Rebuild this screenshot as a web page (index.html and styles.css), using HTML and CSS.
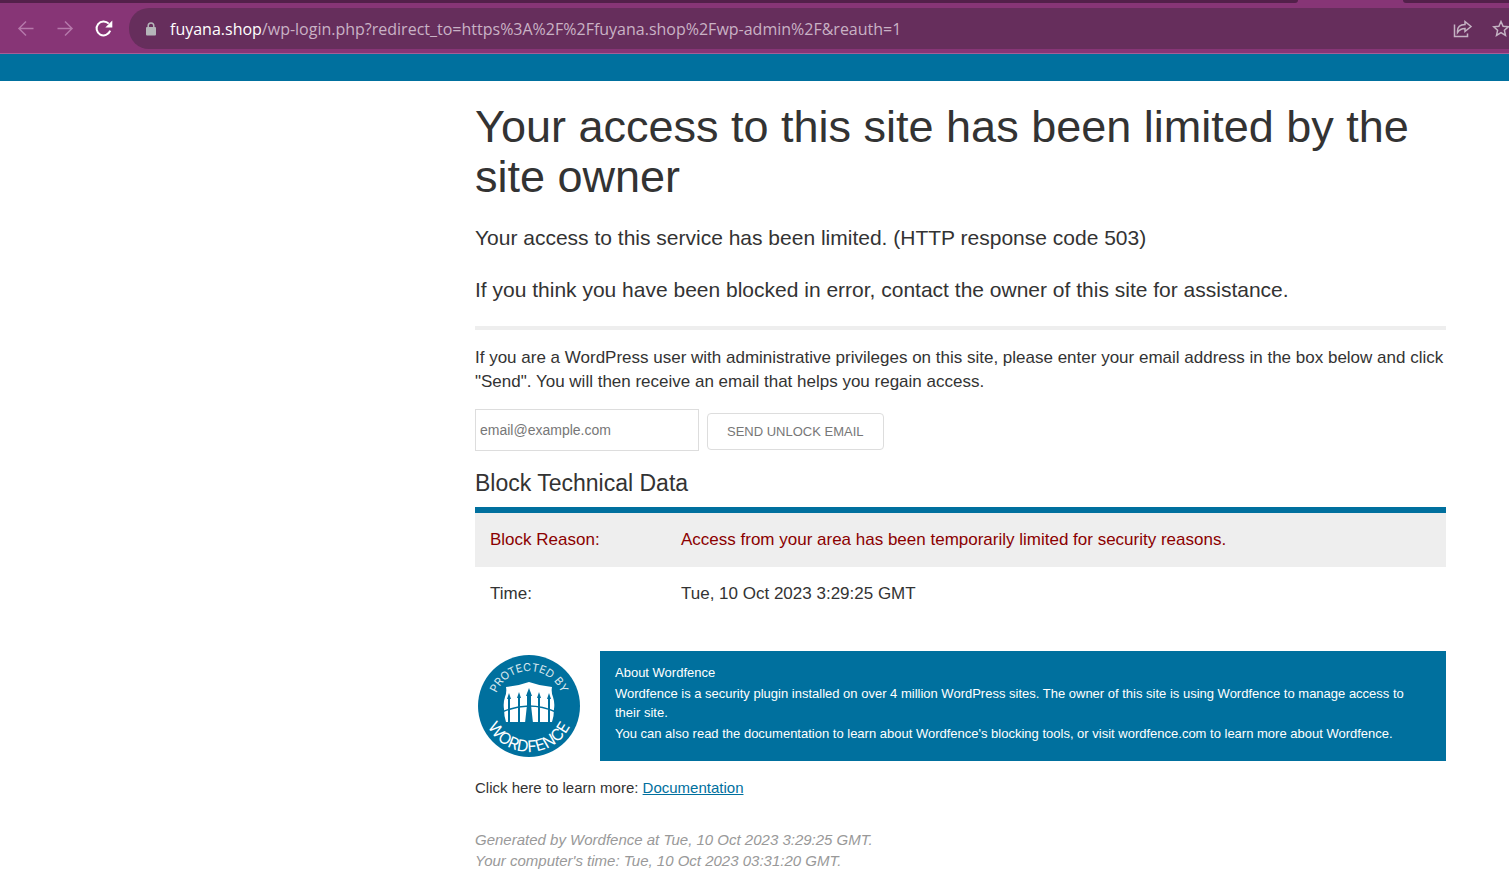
FILE: index.html
```
<!DOCTYPE html>
<html lang="en">
<head>
    <meta charset="UTF-8">
    <meta name="viewport" content="width=device-width, initial-scale=1.0">
    <title>Your access to this site has been limited</title>
    <link rel="stylesheet" href="styles.css">
</head>
<body>
    <header class="browser">
        <div class="tab-strip">
            <span class="tab tab-left"></span>
            <span class="tab tab-right"></span>
        </div>
        <div class="toolbar">
            <nav class="nav-buttons">
                <button type="button" class="icon-button dim" aria-label="Back">
                    <svg width="18" height="18" viewBox="0 0 18 18"><path d="M16.500 8.500H2M9 1.500l-7 7 7 7"/></svg>
                </button>
                <button type="button" class="icon-button dim" aria-label="Forward">
                    <svg width="18" height="18" viewBox="0 0 18 18"><path d="M1.500 8.500H16M9 1.500l7 7-7 7"/></svg>
                </button>
                <button type="button" class="icon-button reload" aria-label="Reload">
                    <svg width="18" height="18" viewBox="0 0 18 18"><path d="M15.200 10.700A7 7 0 1 1 13.800 3.700"/><path class="solid" d="M17.300.500v7h-7z"/></svg>
                </button>
            </nav>
            <div class="address">
                <svg class="lock" width="12" height="14" viewBox="0 0 12 14"><path d="M3.200 6V3.700a2.800 2.800 0 0 1 5.600 0V6" fill="none" stroke="#b5b5b9" stroke-width="1.500"/><rect x="1" y="5" width="10" height="8.500" rx="1" fill="#b5b5b9"/></svg>
                <a class="url" href="#"><span class="host">fuyana.shop</span>/wp-login.php?redirect_to=https%3A%2F%2Ffuyana.shop%2Fwp-admin%2F&amp;reauth=1</a>
                <button type="button" class="icon-button" aria-label="Share">
                    <svg class="share" width="20" height="20" viewBox="0 0 20 20"><path d="M1.500 5.500V17.500H14.500V14.500"/><path d="M4.500 13.500V12C4.500 8 7.500 5.700 12 5.500V2.500L18 7.500l-6 5V9.500C9 9.500 6.500 10.500 4.500 13.500z"/></svg>
                </button>
                <button type="button" class="icon-button" aria-label="Bookmark">
                    <svg class="star" width="18" height="18" viewBox="0 0 18 18"><path d="M9 1.500l2.100 4.800 5.200.500-3.900 3.500 1.100 5.100L9 12.700l-4.500 2.700 1.100-5.100L1.700 6.800l5.200-.500z"/></svg>
                </button>
            </div>
        </div>
    </header>
    <div class="site-bar"></div>
    <main class="container">
        <h1>Your access to this site has been limited by the site owner</h1>
        <p class="large">Your access to this service has been limited. (HTTP response code 503)</p>
        <p class="large">If you think you have been blocked in error, contact the owner of this site for assistance.</p>
        <hr>
        <p class="unlock-text">If you are a WordPress user with administrative privileges on this site, please enter your email address in the box below and click "Send". You will then receive an email that helps you regain access.</p>
        <form class="unlock-form">
            <input type="email" name="email" aria-label="Email address" placeholder="email@example.com">
            <button type="submit" class="send-button">SEND UNLOCK EMAIL</button>
        </form>
        <h2>Block Technical Data</h2>
        <table class="block-data">
            <tr class="reason">
                <th scope="row">Block Reason:</th>
                <td>Access from your area has been temporarily limited for security reasons.</td>
            </tr>
            <tr>
                <th scope="row">Time:</th>
                <td>Tue, 10 Oct 2023 3:29:25 GMT</td>
            </tr>
        </table>
        <section class="about">
            <svg class="badge" width="104" height="104" viewBox="0 0 104 104" role="img" aria-label="Protected by Wordfence">
                <defs>
                    <path id="arc-top" d="M17 52a35 35 0 0 1 70 0"/>
                    <path id="arc-bottom" d="M6 40v12a46 46 0 0 0 92 0v-12"/>
                </defs>
                <circle cx="52" cy="52" r="51" fill="#00709e"/>
                <text class="badge-top"><textPath href="#arc-top" startOffset="50%">PROTECTED BY</textPath></text>
                <text class="badge-bottom"><textPath href="#arc-bottom" startOffset="50%">WORDFENCE</textPath></text>
                <path d="M29 33q12-1 23-5 11 4 23 5-1 5 1 10 2 6 1 12 0 7-2 13H29q-2-6-2-13-1-6 1-12 2-5 1-10z" fill="#fff"/>
                <g stroke="#00709e" stroke-width="2" fill="none">
                    <path d="M32 45v24M42 43v26M62 43v26M72 45v24"/>
                    <path d="M25 58q27-12 54 0" stroke-width="1.500"/>
                </g>
                <path d="M51 38h2l1 3v10l2 18h-8l2-18V41z" fill="#00709e"/>
                <path d="M32 39l2 6h-4zM42 38l2 6h-4zM52 34l3 8h-6zM62 38l2 6h-4zM72 39l2 6h-4z" fill="#00709e"/>
            </svg>
            <div class="about-text">
                <h3>About Wordfence</h3>
                <p>Wordfence is a security plugin installed on over 4 million WordPress sites. The owner of this site is using Wordfence to manage access to their site.</p>
                <p>You can also read the documentation to learn about Wordfence's blocking tools, or visit wordfence.com to learn more about Wordfence.</p>
            </div>
        </section>
        <p class="learn-more">Click here to learn more: <a href="#">Documentation</a></p>
        <p class="generated">Generated by Wordfence at Tue, 10 Oct 2023 3:29:25 GMT.<br>Your computer's time: Tue, 10 Oct 2023 03:31:20 GMT.</p>
    </main>
</body>
</html>
```
FILE: styles.css
```
* {
    box-sizing: border-box;
}
body {
    margin: 0;
    font-family: "Liberation Sans", Arial, sans-serif;
    font-size: 17px;
    line-height: 24px;
    color: #333;
    background: #fff;
    overflow-x: hidden;
}
h1, h2, h3, p {
    margin: 0;
    font-weight: normal;
}
.browser {
    background: #873576;
    border-bottom: 1px solid #a55e98;
}
.tab-strip {
    display: flex;
    justify-content: space-between;
    height: 3px;
}
.tab {
    background: #53204a;
}
.tab-left {
    width: 86%;
    border-bottom-right-radius: 6px;
}
.tab-right {
    width: 7%;
    border-bottom-left-radius: 6px;
}
.toolbar {
    display: flex;
    align-items: center;
    padding: 5px 0 4px 17px;
}
.nav-buttons {
    display: flex;
    gap: 21px;
    margin-right: 16px;
}
.icon-button {
    display: flex;
    padding: 0;
    border: none;
    background: none;
    cursor: pointer;
}
.icon-button svg {
    fill: none;
    stroke: #c4b3c3;
    stroke-width: 1.5;
}
.dim svg {
    stroke: #b578aa;
}
.reload svg {
    stroke: #fff;
    stroke-width: 2;
}
.reload .solid {
    fill: #fff;
    stroke: none;
}
.address {
    display: flex;
    flex: 1;
    align-items: center;
    height: 41px;
    padding-left: 16px;
    border-radius: 20px 0 0 20px;
    background: #662e5c;
}
.url {
    flex: 1;
    margin-left: 13px;
    font-family: "Open Sans", "Noto Sans", sans-serif;
    font-size: 16px;
    color: #c9b2c5;
    text-decoration: none;
    white-space: nowrap;
}
.host {
    color: #fff;
}
.share {
    margin-right: 19px;
}
.star {
    margin-right: -1px;
}
.site-bar {
    height: 27px;
    background: #00709e;
}
.container {
    margin: 21px 63px 16px 475px;
}
h1 {
    margin-bottom: 20px;
    font-size: 45px;
    line-height: 50px;
}
.large {
    margin-bottom: 20px;
    font-size: 21px;
    line-height: 32px;
}
hr {
    height: 4px;
    margin: 0 0 16px;
    border: none;
    background: #eee;
}
.unlock-form {
    display: flex;
    align-items: center;
    gap: 8px;
    margin: 15px 0 16px;
}
.unlock-form input {
    width: 224px;
    height: 42px;
    padding: 0 4px;
    border: 1px solid #ddd;
    font: 14px "Liberation Sans", Arial, sans-serif;
    color: #333;
}
.unlock-form input::placeholder {
    color: #777;
}
.send-button {
    height: 37px;
    margin-top: 3px;
    padding: 0 19px;
    border: 1px solid #ddd;
    border-radius: 4px;
    background: #fff;
    font: 13px "Liberation Sans", Arial, sans-serif;
    color: #777;
    cursor: pointer;
}
h2 {
    margin-bottom: 8px;
    font-size: 23px;
    line-height: 32px;
}
.block-data {
    width: 100%;
    border-top: 6px solid #00709e;
    border-collapse: separate;
    border-spacing: 0;
}
.block-data th,
.block-data td {
    padding: 15px;
    font-weight: normal;
    text-align: left;
}
.block-data th {
    width: 191px;
}
.reason {
    background: #eee;
    color: #8b0000;
}
.about {
    display: flex;
    align-items: center;
    gap: 19px;
    margin-top: 30px;
}
.badge {
    flex: none;
    margin-left: 2px;
}
.badge text {
    font-family: Inter, sans-serif;
    fill: #fff;
    text-anchor: middle;
}
.badge-top {
    font-size: 11px;
    opacity: 0.85;
}
.badge-bottom {
    font-size: 16px;
}
.about-text {
    flex: 1;
    padding: 12px 15px 18px;
    background: #00709e;
    color: #fff;
    font-size: 13px;
    line-height: 19px;
}
.about-text h3 {
    font-size: 13px;
}
.about-text p {
    margin-top: 2px;
}
.learn-more {
    margin: 16px 0 31px;
    font-size: 15px;
    line-height: 21px;
}
.learn-more a {
    color: #00709e;
}
.generated {
    font-size: 15px;
    line-height: 21px;
    font-style: italic;
    color: #999;
}
```
